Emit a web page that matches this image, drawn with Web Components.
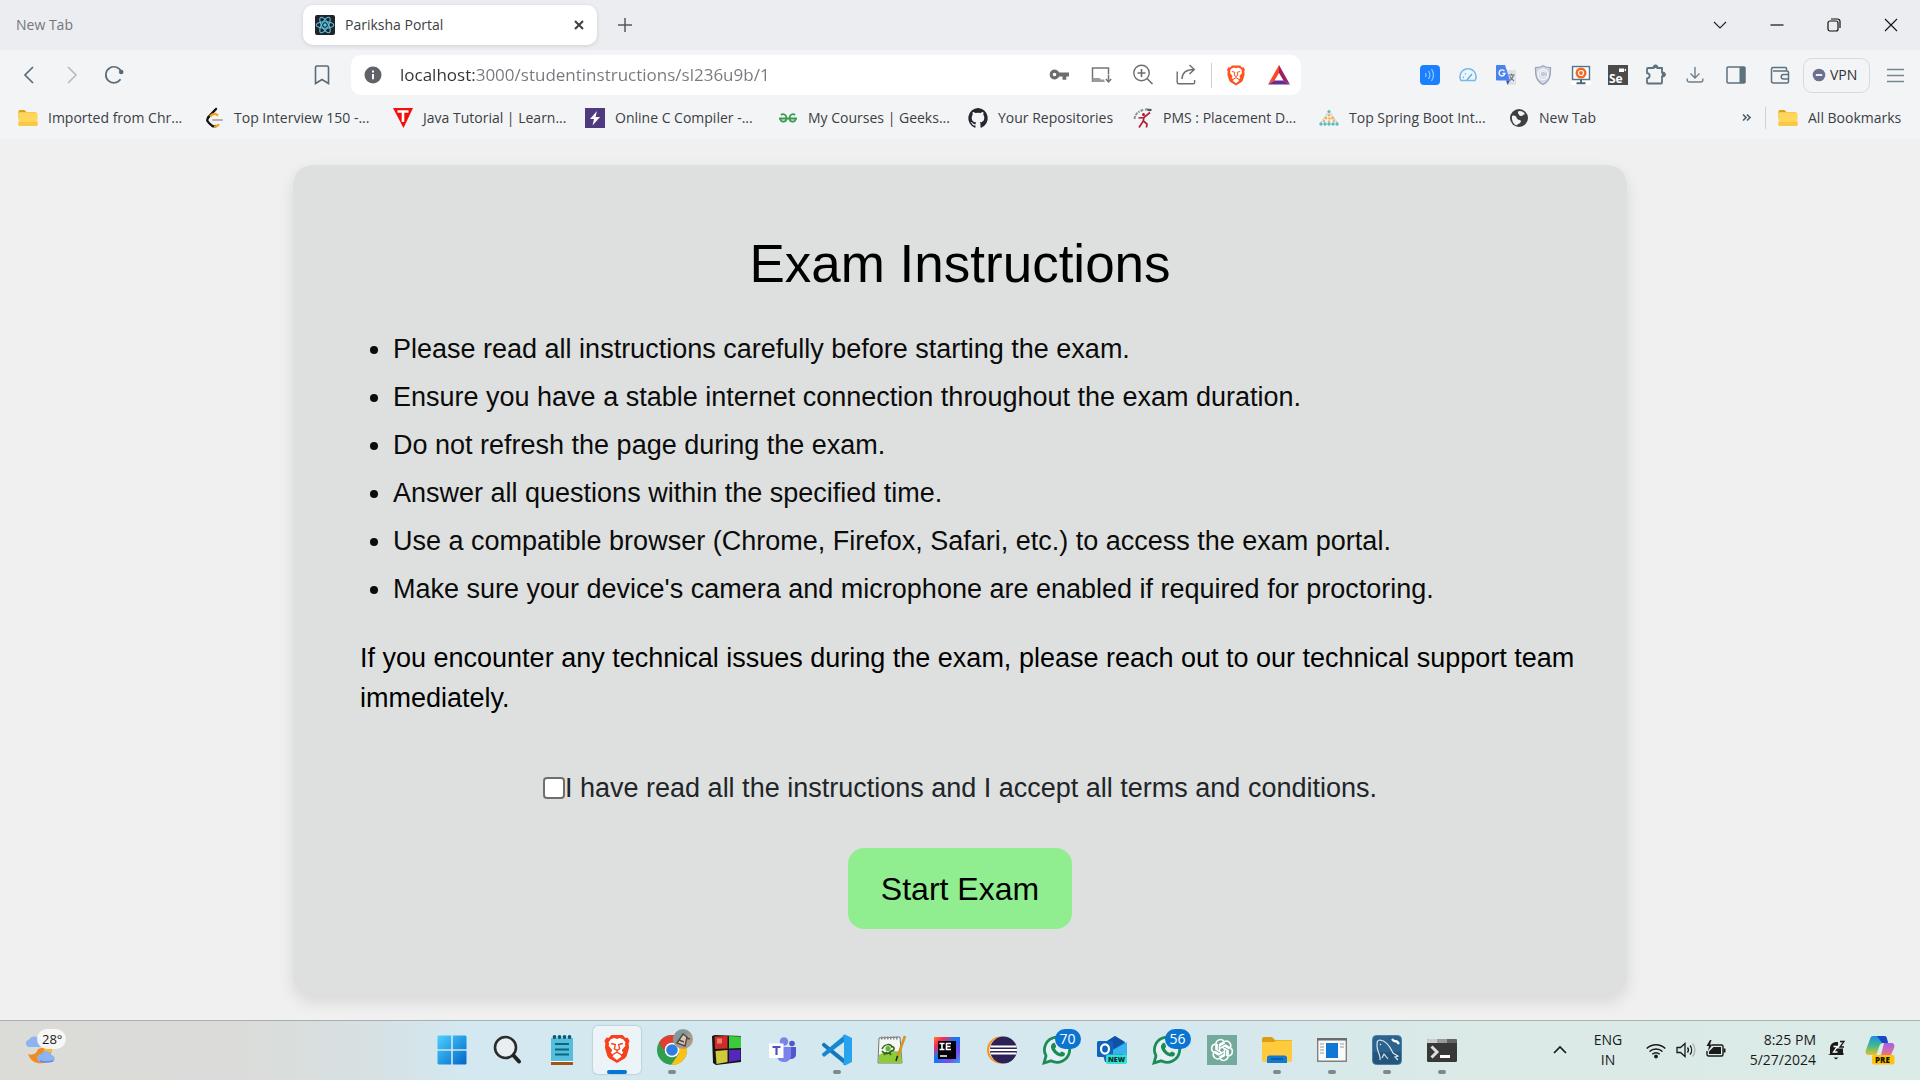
<!DOCTYPE html>
<html lang="en">
<head>
<meta charset="utf-8">
<title>Pariksha Portal</title>
<style>
  html, body { height: 100%; margin: 0; }
  body {
    display: flex; flex-direction: column;
    background: #f0f0f0; color: #3b3e44;
    font-family: "Open Sans", "Noto Sans", sans-serif; font-size: 14px; line-height: 20px;
  }
  exam-page { flex: 1; }
</style>
</head>
<body>
<tab-strip></tab-strip>
<nav-toolbar></nav-toolbar>
<bookmark-bar>
  <bookmark-link icon="folder" style="--label:136px">Imported from Chr...</bookmark-link>
  <bookmark-link icon="leet" style="--label:139px">Top Interview 150 -...</bookmark-link>
  <bookmark-link icon="tpoint" style="--label:142px">Java Tutorial | Learn...</bookmark-link>
  <bookmark-link icon="bolt" style="--label:143px">Online C Compiler -...</bookmark-link>
  <bookmark-link icon="geeks" style="--label:140px">My Courses | Geeks...</bookmark-link>
  <bookmark-link icon="github" style="--label:115px">Your Repositories</bookmark-link>
  <bookmark-link icon="pms" style="--label:136px">PMS : Placement D...</bookmark-link>
  <bookmark-link icon="spring" style="--label:140px">Top Spring Boot Int...</bookmark-link>
  <bookmark-link icon="globe" style="--label:57px">New Tab</bookmark-link>
  <bookmark-link slot="end" icon="folder" style="--label:96px">All Bookmarks</bookmark-link>
</bookmark-bar>
<exam-page>
  <exam-card>
    <span slot="title">Exam Instructions</span>
    <exam-rules></exam-rules>
    <exam-consent></exam-consent>
  </exam-card>
</exam-page>
<task-bar></task-bar>

<script>
const LION = `<path fill="FILL" d="M6 1.500h8l2 2 1.500-.3 1.500 2.600-.7 1.500.3 3.200-1.600 5.500c-.4 1.200-1.200 1.900-2.200 2.600L10 21.500l-4.800-2.900c-1-.7-1.800-1.400-2.200-2.600L1.400 10.500l.3-3.200L1 5.800l1.500-2.600L4 3.500z"/>
<path fill="#fff" d="M10 4.200l2-.7 2.400.9 1.700 2.300-.5 1 .4 1.400-2.600 3.200 1 1.800-1.100 1-2-1.200 1.900 2.800L10 19.200l-3.200-2.500 1.900-2.800-2 1.200-1.100-1 1-1.800L4 9.100l.4-1.400-.5-1 1.700-2.300L8 3.500z"/>
<path fill="none" stroke="FILL" stroke-width="1" d="M5.800 7.500l3 .8-.7 2.900 1.900 1.300 1.900-1.300-.7-2.900 3-.8M7.700 15l2.300-1.300 2.300 1.300M10 12.500v1.200"/>`;
const WHATS = `<path fill="#fff" fill-opacity=".35" stroke="#1c8b57" stroke-width="2.800" d="M2 28l2-7.200a12.600 12.600 0 1 1 5 5z"/>
<path fill="#1c8b57" d="M10.500 8.500c1-1 2-.9 2.500.1l1.100 2.600c.2.700-.9 1.600-1.200 2.200 1.100 2.200 2.800 3.600 4.900 4.500.7-.3 1.300-1.700 2-1.500l2.700 1.300c1 .6.4 2.500-.6 3.200-1.700 1.200-4.300.8-7-.7-3.300-1.900-5.500-5.200-5.900-7.600-.3-1.600.3-3 1.500-4.100z"/>`;
// Each entry: [width, height, markup]
const ICONS = {
  react: [20,20,`<rect width="20" height="20" rx="2" fill="#20232a"/><g fill="none" stroke="#5cc8e8" stroke-width="1.100"><ellipse cx="10" cy="10" rx="8.800" ry="3.300"/><ellipse cx="10" cy="10" rx="8.800" ry="3.300" transform="rotate(60 10 10)"/><ellipse cx="10" cy="10" rx="8.800" ry="3.300" transform="rotate(120 10 10)"/></g><circle cx="10" cy="10" r="1.700" fill="#5cc8e8"/>`],
  x: [12,12,`<path d="M2 2l8 8M10 2l-8 8" stroke="#3b3e44" stroke-width="2"/>`],
  plus: [16,16,`<path d="M8 1v14M1 8h14" stroke="#55585e" stroke-width="1.500"/>`],
  down: [14,14,`<path d="M1 4l6 6 6-6" fill="none" stroke="#222" stroke-width="1.100"/>`],
  min: [14,14,`<path d="M.5 7h13" stroke="#111" stroke-width="1.200"/>`],
  restore: [14,14,`<rect x="1" y="3" width="10" height="10" rx="2" fill="none" stroke="#111" stroke-width="1.200"/><path d="M4 1h6.500A2.500 2.500 0 0 1 13 3.500V10" fill="none" stroke="#111" stroke-width="1.200"/>`],
  close: [14,14,`<path d="M1 1l12 12M13 1L1 13" stroke="#111" stroke-width="1.100"/>`],
  back: [20,20,`<path d="M13 2l-8 8 8 8" fill="none" stroke="#5a6b78" stroke-width="1.700"/>`],
  fwd: [20,20,`<path d="M6 2l8 8-8 8" fill="none" stroke="#b4bcc4" stroke-width="1.700"/>`],
  reload: [20,20,`<path d="M16.500 14.200A8 8 0 1 1 17.400 7.200" fill="none" stroke="#5a6b78" stroke-width="1.700"/><circle cx="17.200" cy="7" r="2.300" fill="#5a6b78"/>`],
  mark: [20,20,`<path d="M3.500 2.500a1.500 1.500 0 0 1 1.500-1.500h10a1.500 1.500 0 0 1 1.500 1.500V18.500L10 14.500 3.500 18.500z" fill="none" stroke="#5a6b78" stroke-width="1.600"/>`],
  info: [18,18,`<circle cx="9" cy="9" r="8.500" fill="#5f6368"/><path d="M9 8v5.200M9 4.500v2" stroke="#fff" stroke-width="1.900"/>`],
  key: [22,22,`<path fill-rule="evenodd" fill="#6d6d6d" d="M11.200 8.500A5 5 0 1 0 11.200 12.500H14.500v3.200h3.800V12.500H21V8.500zM6.500 8.700a1.800 1.800 0 1 1 0 3.600 1.800 1.800 0 0 1 0-3.600z"/>`],
  install: [22,22,`<path d="M18.500 10V4H2.500v13.300h12" fill="none" stroke="#757575" stroke-width="1.500"/><path d="M2.500 14h7l1.500 1.500h3V18H2.500z" fill="#9b9b9b"/><path d="M18.500 10.500v7M15.800 15l2.700 3 2.700-3" fill="none" stroke="#757575" stroke-width="1.500"/>`],
  zoom: [22,22,`<circle cx="9.500" cy="9" r="7.700" fill="none" stroke="#6d6d6d" stroke-width="1.400"/><path d="M15 14.500l5.500 5.500M9.500 5v8M5.500 9h8" stroke="#6d6d6d" stroke-width="1.600"/>`],
  share: [22,22,`<path d="M2.200 7.500v10.700a1.600 1.600 0 0 0 1.600 1.600h14.500a1.300 1.300 0 0 0 1.300-1.300V16M7 15c0-6 3.500-9.500 12-9.500M14.500 1l4.800 4.500L14.500 10" fill="none" stroke="#6d6d6d" stroke-width="1.400"/>`],
  brave: [20,23,LION.replaceAll('FILL','#fb5420')],
  bat: [24,22,`<path d="M12 1L1 20.500l6.500-4L12 9z" fill="#ff4724"/><path d="M12 1l11 19.500-6.500-4L12 9z" fill="#9e1f63"/><path d="M1 20.500h22l-6.500-4h-9z" fill="#662d91"/>`],
  wave: [20,20,`<rect width="20" height="20" rx="4" fill="#1a80ff"/><path d="M5.500 8a4 4 0 0 1 0 4M8.500 6a7 7 0 0 1 0 8M11.500 4a11 11 0 0 1 0 12" fill="none" stroke="#8fc4ff" stroke-width="1.300"/>`],
  gauge: [20,20,`<path d="M3 15.500a8 8 0 1 1 14 0z" fill="#eaf5fd" stroke="#7bb8e4" stroke-width="1.500"/><path d="M9 15l5-6M5 12l1 .5M7 8.500l.7.800" stroke="#6aaedd" stroke-width="1.500"/>`],
  translate: [20,20,`<path d="M8 5h11a1 1 0 0 1 1 1v13a1 1 0 0 1-1 1h-7z" fill="#dfe1e5"/><path d="M1 0h8l5 15.500H1a1 1 0 0 1-1-1V1a1 1 0 0 1 1-1z" fill="#4a82ee"/><path d="M10 15.500h4l-2.500 4.500z" fill="#3a4fc0"/><path d="M8.500 6.200A3 3 0 1 0 9 8.500H6.500" fill="none" stroke="#fff" stroke-width="1.300"/><path d="M12.500 10h6M15.500 8.700V10M17.500 10c-.7 3-2.500 4.500-3.500 5.500M14 11.500c1 2 2.500 3.500 4 4.300" fill="none" stroke="#5f6b7b" stroke-width="1.100"/>`],
  shield: [20,20,`<path d="M10 .7c2.500 1.500 5 2 7.500 2C17.700 10 17 16 10 19.500 3 16 2.300 10 2.500 2.700c2.500 0 5-.5 7.500-2z" fill="#d3d9e4" stroke="#9aa4b8" stroke-width="1.300"/><circle cx="10" cy="9.500" r="5" fill="#c3c9d6" stroke="#f6f7fa" stroke-width="1.600"/><path d="M12.500 7.500a3 3 0 1 0 .3 3" fill="none" stroke="#f6f7fa" stroke-width="1.200"/>`],
  monitor: [20,20,`<path fill="#fff" d="M0 0h20v20H0z"/><rect x="1.500" y="1.500" width="17" height="13" fill="#fff" stroke="#557888" stroke-width="1.500"/><path d="M10 15v3M5.500 18.300h9" stroke="#4c6b7c" stroke-width="2"/><circle cx="10" cy="8" r="5.500" fill="#f26a21"/><circle cx="10" cy="8" r="2.500" fill="none" stroke="#fff" stroke-width="1.200"/>`],
  se: [20,20,`<path fill="#4b4b4b" d="M0 0h20v20H0z"/><path d="M11 3.500h5v3.500h-5zM16 5l2-1.500v3z" fill="#fff"/><text x="1" y="18" font-family="Open Sans" font-size="12" font-weight="700" fill="#fff">Se</text>`],
  puzzle: [22,22,`<path d="M4 4h4.500c-.5-3.500 4.500-3.500 4 0H17v4.500c4-.5 4 4.500 0 4V18.500a1 1 0 0 1-1 1H3a1 1 0 0 1-1-1V14.500c3.500-.5 3.500-5 0-5.500V5a1 1 0 0 1 1-1z" fill="none" stroke="#5c727f" stroke-width="1.800"/><path d="M8.500 4c-.5-3.500 4.500-3.500 4 0zM17 8.500c4-.5 4 4.500 0 4z" fill="#5c727f"/>`],
  download: [20,20,`<path d="M10 2v10.500M5.500 8.500l4.500 4.500 4.500-4.500M2.200 13.500v1.500a2 2 0 0 0 2 2h11.600a2 2 0 0 0 2-2v-1.500" fill="none" stroke="#6c7f8b" stroke-width="1.400"/>`],
  side: [20,20,`<rect x="1" y="2" width="18" height="16" rx="1" fill="none" stroke="#5c727f" stroke-width="1.500"/><path d="M13.500 2H19v16h-5.500z" fill="#5c727f"/>`],
  wallet: [22,20,`<path d="M17.500 6V3.500a1 1 0 0 0-1-1H4A1.500 1.500 0 0 0 2.500 4v12A2 2 0 0 0 4.500 18h13.500a1.500 1.500 0 0 0 1.500-1.500V7.500A1.500 1.500 0 0 0 18 6H4" fill="none" stroke="#5c727f" stroke-width="1.500"/><path d="M20 9.500h-5.500a2.200 2.200 0 0 0 0 4.500H20" fill="none" stroke="#5c727f" stroke-width="1.500"/>`],
  vpn: [14,14,`<circle cx="7" cy="7" r="6.300" fill="#6d7090"/><path d="M3.800 7h6.400" stroke="#fff" stroke-width="1.800"/>`],
  menu: [18,18,`<path d="M1 3.500h17M1 9.500h17M1 15.500h17" stroke="#75868f" stroke-width="1.400"/>`],
  folder: [20,20,`<path d="M.5 3.500a1.500 1.500 0 0 1 1.500-1.500h4.500l1.800 2H18v6H.5z" fill="#dca017"/><rect x=".5" y="4.300" width="19" height="13.700" rx="1.500" fill="#ffd65c"/><path d="M.5 14v2.500A1.500 1.500 0 0 0 2 18h16a1.500 1.500 0 0 0 1.500-1.500V14z" fill="#f7c843"/>`],
  leet: [20,20,`<path d="M12 1L4.500 9" stroke="#111" stroke-width="2.400" stroke-linecap="round"/><path d="M5 8.500C2 12 3 13 5.500 15.500S9 19 12 18" fill="none" stroke="#111" stroke-width="2.400"/><path d="M6 8.500c3-3.500 5-3.500 8-1M10 18.500c2 .5 3.500-.7 5-2.300" fill="none" stroke="#f7a11b" stroke-width="2.400"/><path d="M9 12h9" stroke="#b3b3b3" stroke-width="2.200" stroke-linecap="round"/>`],
  tpoint: [20,20,`<path d="M0 0h20L10.500 20z" fill="#f30d0d"/><path d="M4.500 3.500h11M10 3.500V14" stroke="#fff" stroke-width="2.600"/>`],
  bolt: [20,20,`<path fill="#4f3a80" d="M0 0h20v20H0z"/><path d="M12 3L5 11h4l-1.500 6.500L15 9h-4.500z" fill="#fff"/>`],
  geeks: [20,20,`<path d="M1 10.500h18M3 7.200c2-2.200 5.500-.5 5.500 3 0 4.500-6.500 4.800-6 .3M17 7.200c-2-2.200-5.500-.5-5.500 3 0 4.500 6.500 4.800 6 .3" fill="none" stroke="#3a9c52" stroke-width="1.800"/>`],
  github: [20,20,`<path fill="#22272e" fill-rule="evenodd" d="M10 0a10.200 10.200 0 0 0-3.200 19.700c.5.100.7-.2.700-.5v-1.800c-2.800.6-3.400-1.300-3.400-1.300-.5-1.200-1.100-1.500-1.100-1.500-.9-.6.100-.6.100-.6 1 .1 1.500 1 1.500 1 .9 1.600 2.400 1.100 3 .9.100-.7.400-1.100.6-1.400-2.200-.3-4.500-1.100-4.500-5 0-1.100.4-2 1-2.700-.1-.3-.4-1.300.1-2.700 0 0 .8-.3 2.700 1a9.400 9.400 0 0 1 5 0c1.900-1.300 2.700-1 2.700-1 .5 1.400.2 2.400.1 2.700.6.700 1 1.600 1 2.700 0 3.900-2.300 4.700-4.500 5 .4.300.7.900.7 1.900v2.800c0 .3.200.6.700.5A10.200 10.200 0 0 0 10 0z"/>`],
  pms: [20,20,`<path d="M1.500 11c.5-3.500 2-6 5-7.500M7.500 3l3-1.500M12 1.800l4-1" fill="none" stroke="#8a9696" stroke-width="2" stroke-dasharray="3 1"/><ellipse cx="16.500" cy="2" rx="2.300" ry="1.300" fill="#4e5c5c"/><circle cx="10.500" cy="6.500" r="1.500" fill="#a6192e"/><path d="M5.500 10l5.500-.5 6-5M11 9.500l-1 4-4 6M10.500 13l3.500 3-.5 3.500" fill="none" stroke="#b11f36" stroke-width="1.700"/>`],
  spring: [20,20,`<path d="M10 3L2 14.500M10 3l8 11.500" stroke="#a9d8dc" stroke-width="1.200" stroke-dasharray="2 1"/><g fill="#f6b15c"><circle cx="10" cy="7" r="1.500"/><circle cx="7" cy="10" r="1.500"/><circle cx="10.500" cy="10.500" r="1.300"/><circle cx="13.500" cy="10" r="1.500"/><circle cx="5" cy="13" r="1.300"/><circle cx="10" cy="13.500" r="1.300"/><circle cx="15" cy="13" r="1.300"/></g><g fill="#58bcc4"><circle cx="10" cy="3.500" r="1.500"/><circle cx="2" cy="16" r="1.700"/><circle cx="6" cy="16" r="1.700"/><circle cx="10" cy="16" r="1.700"/><circle cx="14" cy="16" r="1.700"/><circle cx="18" cy="16" r="1.700"/></g>`],
  globe: [20,20,`<circle cx="10" cy="10" r="9" fill="#3c4043"/><path d="M3 8c2-1 4 0 4.500 1.500S9 12 10.500 12s2 1.500.5 3-3 1-3.500 2.500C4 16 2.500 12 3 8zM9 3.500c2-1.500 5.500 0 7 2.500-2 .5-2 2-4 2S10 6 9 5.500z" fill="#f3f4f6"/>`],
  more: [12,12,`<path d="M2 2.500L5 5.500 2 8.500M6 2.500l3 3-3 3" fill="none" stroke="#4f5f6d" stroke-width="1.700"/>`],
  weather: [32,30,`<path d="M3 19c5 2 9-1 10-5l10-3 4 3-2 10c-4 6-18 7-22-5z" fill="#f08c1c"/><path d="M19 12h8v6h-8z" fill="#f6b93a"/><path d="M3 12a4 4 0 0 1 1-7.500 6 6 0 0 1 10.500 0c4 0 5 7.500.5 7.500z" fill="#8db3f2"/><path d="M16 27a4 4 0 0 1 .500-8 5 5 0 0 1 9.500 1c4.500 0 5 7 1 7z" fill="#8db3f2"/><path d="M15 26c3 1 9 1 13 0" stroke="#5f8ce0" stroke-width="1.600" fill="none"/>`],
  start: [30,30,`<defs><linearGradient id="g" x1="0" y1="0" x2="1" y2="1"><stop stop-color="#4cd0ff"/><stop offset="1" stop-color="#0067c9"/></linearGradient></defs><path fill="url(#g)" d="M1.500.5h12.700v13.700H.5V1.500zM15.800.5h12.700l1 1v12.700H15.800zM.5 15.800h13.700v13.700H1.500l-1-1zM15.800 15.800h13.700v12.700l-1 1H15.800z"/>`],
  search: [30,30,`<circle cx="13.500" cy="12.500" r="10.500" fill="#e7eff3" stroke="#2b2b2b" stroke-width="2.600"/><path d="M21.500 20.500l5.500 6" stroke="#222" stroke-width="4" stroke-linecap="round"/>`],
  notes: [30,30,`<path fill="#a3540f" d="M4 26h22v4H4z"/><path fill="#fff" d="M4 25h22v2H4z"/><path fill="#55bedc" d="M4 3h22v23H4z"/><path d="M8 9h14M8 14.500h14M8 19.500h14" stroke="#096781" stroke-width="2"/><g fill="#075a72"><circle cx="7.500" cy="2" r="1.900"/><circle cx="12.500" cy="2" r="1.900"/><circle cx="17.500" cy="2" r="1.900"/><circle cx="22.500" cy="2" r="1.900"/></g>`],
  braveBig: [26,30,`<g transform="translate(-1 -2) scale(1.400)">${LION.replaceAll('FILL','#f8401c')}</g>`],
  chrome: [30,30,`<g transform="translate(0 -6)"><circle cx="15" cy="21" r="15" fill="#2f9e4e"/><path d="M2 13.500A15 15 0 0 1 28 13.500H15L9 24z" fill="#e13d31"/><path d="M28 13.500A15 15 0 0 1 14 36l8-11.500-1-11z" fill="#fbc116"/><circle cx="15" cy="21" r="7.300" fill="#fff"/><circle cx="15" cy="21" r="5.800" fill="#2f7de1"/><circle cx="26" cy="10" r="10" fill="#a89a8c"/><path d="M18 5c3-5 11-6 15-1l-5 2-5 8-5 2-1-6z" fill="#7d9a9e"/><path d="M20 14l6-9 4 3-2 9zM29 9l4 1M22 11l5 2" fill="#d8c7b6" stroke="#54463e" stroke-width="1.400"/></g>`],
  cube: [30,30,`<path fill="#141414" d="M0 1l3-1 26 1v26L4 30l-3-2z"/><path fill="#d22a28" d="M2.500 1.500L15.500 1v12.500L3 14z"/><path fill="#e98070" d="M5 3.500h5v5H5z"/><path fill="#3dc93c" d="M17 1l12 .5V13l-12 .5z"/><path fill="#cfc93c" d="M3.500 16l12-1v12L4.500 29z"/><path fill="#5426bb" d="M17 15l11.500-.5V25L17 27z"/>`],
  teams: [30,30,`<circle cx="17" cy="6.500" r="4.200" fill="#7b83eb"/><circle cx="25" cy="8.500" r="2.800" fill="#5059c9"/><path d="M20 12h9v8a5 5 0 0 1-8 3z" fill="#5059c9"/><path d="M10 12h14v8a7 6 0 0 1-14 2z" fill="#7b83eb"/><path d="M2 8.500h14.500v14.500H2z" fill="#fff"/><path d="M5.500 12h8M9.500 12v8" stroke="#4b53bc" stroke-width="2.200"/>`],
  code: [32,32,`<path d="M1 10l2-1.500 20 16V30L1.300 12z" fill="#1478bd"/><path d="M1 21l2 2L23 8V1.500L1.300 19.500z" fill="#1688d2"/><path d="M22 1l2-.5 7 3.500v24l-7 3.500-2-1 1-4V6z" fill="#28a4ee"/>`],
  npp: [30,30,`<path d="M2 3l21-1 2 26H1z" fill="#f6f6f2" stroke="#777"/><path d="M4 3h18" stroke="#888" stroke-width="3" stroke-dasharray="1.500 1.500"/><path d="M2 20c7-4 14-5 22-3l1 11H2z" fill="#8dcb3b"/><path d="M5 14c3-6 9-5 10-2 3-1 3 4-1 4-2 4-7 3-9 0M7 20l3-3M14 20l-2-3" fill="none" stroke="#2d5d1c" stroke-width="1.500"/><circle cx="11" cy="13.500" r="2.600" fill="#67b23a"/><path d="M28 1L20.500 22" stroke="#d79326" stroke-width="2.600"/><path d="M20.500 21l-1.500 5" stroke="#222" stroke-width="1.500"/>`],
  idea: [26,26,`<defs><linearGradient id="i" x1="0" y1="0" x2="1" y2="1"><stop stop-color="#fc801d"/><stop offset=".2" stop-color="#fe2857"/><stop offset=".45" stop-color="#087cfa"/><stop offset=".75" stop-color="#7a4cf0"/><stop offset="1" stop-color="#31a4f5"/></linearGradient></defs><path fill="url(#i)" d="M0 0h26v26H0z"/><path fill="#050008" d="M4 4h18v18H4z"/><path d="M5.500 6.500h5M8 6.500v6M5.500 12.500h5M17 6.500h-4.500v6H17M12.500 9.500h4M6 19h7" fill="none" stroke="#fff" stroke-width="1.600"/>`],
  eclipse: [30,28,`<circle cx="13.500" cy="14" r="13.500" fill="#f7941e"/><circle cx="14.500" cy="14" r="12.500" fill="#f3e2cd"/><circle cx="16.500" cy="14" r="13.500" fill="#2c2255"/><path d="M3.500 10.500h26M3 14h27M3.500 17.500h26" stroke="#fff" stroke-width="1.900"/>`],
  whats: [30,30,WHATS],
  outlook: [30,30,`<path d="M5 10L18 1l12 8v12H5z" fill="#1a6fd0"/><path d="M5 9L18 1l10 6-14 9z" fill="#1051a8"/><path d="M14 16l16-9v14H12z" fill="#39b3ef"/><path d="M6 20l20-1v6a2 2 0 0 1-2 2H8z" fill="#1f5fae"/><rect y="6" width="16" height="16" rx="1.500" fill="#0f63bd"/><ellipse cx="8" cy="14" rx="4" ry="4.600" fill="none" stroke="#fff" stroke-width="2.200"/><rect x="9" y="19.500" width="21" height="9.500" rx="2" fill="#2fe0d5"/><text x="11" y="27" font-family="Open Sans" font-size="7" font-weight="800" fill="#05302e">NEW</text>`],
  gpt: [30,30,`<path fill="#74aa9c" d="M0 0h30v30H0z"/><g fill="none" stroke="#fff" stroke-width="1.500">${[0,60,120,180,240,300].map(a=>`<path transform="rotate(${a} 15 15)" d="M12.500 16.500V9.500L17 6.800a4.500 4.500 0 0 1 6.500 5.500M12.500 10.800l5.200-3"/>`).join('')}</g>`],
  files: [30,28,`<path d="M0 3a2 2 0 0 1 2-2h8l3 3h17v8H0z" fill="#dd9d10"/><path d="M0 6h12l2-1.500h16V24a2 2 0 0 1-2 2H2a2 2 0 0 1-2-2z" fill="#fecb3c"/><path d="M5 27v-5a2.500 2.500 0 0 1 2.500-2.500h15A2.500 2.500 0 0 1 25 22v5z" fill="#137ad1"/><path d="M9 23h12" stroke="#0a4c92" stroke-width="1.300"/>`],
  panel: [30,24,`<path fill="#fafafa" stroke="#808080" stroke-width="1.400" d="M.7.7h28.600v22.600H.7z"/><path fill="#6c6c6c" d="M0 0h30v2.500H0z"/><path fill="#0f78d4" d="M9 5h12v15H9z"/><path d="M3 6h4M3 9h4M3 12h4M3 15h4M23 6h4M23 9h4" stroke="#999"/>`],
  mysql: [30,30,`<rect x=".5" y=".5" width="29" height="29" rx="4" fill="#2c638e" stroke="#477fa9"/><path d="M1 17h28v8a4 4 0 0 1-4 4H5a4 4 0 0 1-4-4z" fill="#24557a"/><path d="M8 25c1-4-3-9-3-14 0-4 0-6 3-6 8 1 11 9 13 13l5 3-3 1 3 3M10 23l2-4 4 5M8 9l1 1" fill="none" stroke="#d9e7f1" stroke-width="1.200"/><path d="M20 4l2 2 3 .5L27 9" stroke="#fff" stroke-width="2.300" fill="none"/>`],
  term: [30,24,`<rect width="30" height="23" rx="1.500" y="1" fill="#383838"/><path fill="#ccc" d="M1 1h9v4H0V2z"/><path fill="#9a9a9a" d="M10 1h10v4H10z"/><path fill="#636363" d="M20 1h9l1 1v3H20z"/><path d="M4.500 8.500L10 14l-5.500 5.500" fill="none" stroke="#ddd" stroke-width="3"/><path d="M13 18.500h10" stroke="#fff" stroke-width="3"/>`],
  up: [14,14,`<path d="M1 10l6-6 6 6" fill="none" stroke="#1a1a1a" stroke-width="1.700"/>`],
  wifi: [20,20,`<g fill="none" stroke="#1a1a1a" stroke-width="1.500"><path d="M.7 8.500a13.500 13.500 0 0 1 18.600 0M3.500 11.500a9.500 9.500 0 0 1 13 0M6.300 14.300a5.500 5.500 0 0 1 7.400 0"/></g><circle cx="10" cy="16.500" r="1.900" fill="#1a1a1a"/>`],
  sound: [20,20,`<path d="M1 7.500h3.500L9 3.500v13L4.500 12.500H1zM11.500 7.500a4 4 0 0 1 0 5M14 5.500a7 7 0 0 1 0 9" fill="none" stroke="#1a1a1a" stroke-width="1.300"/><path d="M16.500 3.500a10 10 0 0 1 0 13" fill="none" stroke="#a9b5b5" stroke-width="1.300"/>`],
  battery: [20,20,`<path d="M6 5h9.500A1.500 1.500 0 0 1 17 6.500v8A1.500 1.500 0 0 1 15.500 16h-13A1.500 1.500 0 0 1 1 14.500V11" fill="none" stroke="#1a1a1a" stroke-width="1.400"/><path d="M7.500 7H15v7H3v-2.500zM17.500 8.500h2v4h-2zM4 0L.5 6H3l-1 5 4.500-6.500H4L5.500 0z" fill="#1a1a1a"/>`],
  bell: [20,20,`<path d="M3 14V8a6 6 0 0 1 6-6h2v6h5v5h.500v2H1z" fill="#1a1a1a"/><path d="M6.500 17.500h5l-2.500 2z" fill="#1a1a1a"/><path d="M12 1.500h4.500L12 7h4.500" fill="none" stroke="#dcebe6" stroke-width="3"/><path d="M13 1.500h4L13 7h4" fill="none" stroke="#1a1a1a" stroke-width="1.300"/><path d="M6.500 6.500h4l-4 5.500h4" fill="none" stroke="#fff" stroke-width="1.300"/>`],
  copilot: [30,30,`<defs><linearGradient id="c" x1="0" y1="0" x2="0" y2="1"><stop stop-color="#1b8eea"/><stop offset=".5" stop-color="#3fb98f"/><stop offset="1" stop-color="#e8c22a"/></linearGradient><linearGradient id="d" x1="0" y1="0" x2="0" y2="1"><stop stop-color="#a25cf2"/><stop offset="1" stop-color="#ff7a63"/></linearGradient></defs><path d="M8 1h11c2 0 2.500 1 3 3l1 4h-4c-3 0-4 1-5 4l-2 6c-.5 1.500-1 2-3 2H4c-3 0-4-2-3-5L5 4c.6-2 1.500-3 3-3z" fill="url(#c)"/><path d="M12 1h7c2 0 2.500 1 3 3l1 4h-6z" fill="#1b46c4"/><path d="M19 8h7c3 0 4 2 3 5l-3 7-2 3H13c2 0 2.500-1 3-3z" fill="url(#d)"/><rect x="7" y="20" width="22.500" height="9.500" rx="2" fill="#fdc40d"/><text x="10" y="27.500" font-family="Open Sans" font-size="8" font-weight="800" fill="#1b1500">PRE</text>`]
};

function define(name, html, setup) {
  const tpl = document.createElement('template');
  tpl.innerHTML = html;
  customElements.define(name, class extends HTMLElement {
    constructor() { super(); this.attachShadow({ mode: 'open' }).append(tpl.content.cloneNode(true)); }
    connectedCallback() { if (setup) setup(this, this.shadowRoot); }
  });
}

define('ui-icon', `<style>:host{display:inline-flex;flex:none}svg{display:block;overflow:visible}</style><span></span>`, (el, root) => {
  const [w, h, body] = ICONS[el.getAttribute('name')];
  root.querySelector('span').innerHTML = `<svg width="${w}" height="${h}" viewBox="0 0 ${w} ${h}" aria-hidden="true">${body}</svg>`;
});

/* Icon-only button; its width comes from --cell */
define('icon-button', `<style>
  :host{display:inline-flex;flex:none}
  button{display:flex;align-items:center;justify-content:center;width:var(--cell,38px);height:32px;padding:0;border:0;background:none}
</style><button type="button"></button>`, (el, root) => {
  const button = root.querySelector('button');
  button.setAttribute('aria-label', el.getAttribute('label'));
  button.innerHTML = `<ui-icon name="${el.getAttribute('icon')}"></ui-icon>`;
});

define('tab-strip', `<style>
  :host{display:flex;align-items:center;height:50px;background:#ecedf1}
  .idle,.active{font:inherit;color:inherit;border:0;text-align:left}
  .idle{width:303px;padding:0 16px;background:none;color:#73767c;font-size:14px;box-sizing:border-box}
  .active{display:flex;align-items:center;gap:10px;width:294px;height:40px;box-sizing:border-box;padding:0 0 0 12px;border-radius:10px;background:#fff;box-shadow:0 1px 4px rgba(0,0,0,.12)}
  .tab{flex:1;font:inherit;color:inherit;border:0;background:none;padding:0;text-align:left}
  .add{--cell:56px}
  .win{margin-left:auto;margin-right:1px;display:flex;--cell:57px}
</style>
<button class="idle" type="button">New Tab</button>
<div class="active"><ui-icon name="react"></ui-icon><button class="tab" type="button">Pariksha Portal</button><icon-button icon="x" label="Close tab" style="--cell:36px"></icon-button></div>
<icon-button class="add" icon="plus" label="New tab"></icon-button>
<div class="win"><icon-button icon="down" label="Search tabs"></icon-button><icon-button icon="min" label="Minimize"></icon-button><icon-button icon="restore" label="Restore"></icon-button><icon-button icon="close" label="Close"></icon-button></div>`);

define('nav-toolbar', `<style>
  :host{display:flex;align-items:center;height:50px;background:#f3f4f6}
  .nav{display:flex;width:303px;box-sizing:border-box;padding-left:9px;--cell:42px}
  .url{display:flex;align-items:center;flex:1;height:40px;margin-left:10px;border-radius:10px;background:#fff;padding:0 0 0 13px;--cell:42px}
  input{flex:1;min-width:0;margin-left:18px;padding:0;border:0;outline:0;font:inherit;font-size:17px;line-height:24px;color:#6b6e73;
    background:linear-gradient(90deg,#2f3237 75px,#75787d 75px);-webkit-background-clip:text;background-clip:text;-webkit-text-fill-color:transparent}
  .line{width:1px;height:25px;background:#ccc;margin:0 3px}
  .ext{display:flex;margin-left:110px;--cell:38px}
  .vpn{display:flex;align-items:center;gap:4px;width:67px;height:35px;box-sizing:border-box;padding:0 0 0 8px;border:1px solid #d3dae0;border-radius:9px;background:none;font:inherit;color:#2f3237}
  .menu{--cell:50px}
</style>
<div class="nav"><icon-button icon="back" label="Back"></icon-button><icon-button icon="fwd" label="Forward"></icon-button><icon-button icon="reload" label="Reload"></icon-button></div>
<icon-button icon="mark" label="Bookmark this page"></icon-button>
<div class="url"><ui-icon name="info"></ui-icon>
  <input type="text" aria-label="Address" value="localhost:3000/studentinstructions/sl236u9b/1">
  <icon-button icon="key" label="Passwords"></icon-button><icon-button icon="install" label="Install"></icon-button><icon-button icon="zoom" label="Zoom"></icon-button><icon-button icon="share" label="Share" style="--cell:44px"></icon-button><span class="line"></span><icon-button icon="brave" label="Shields"></icon-button><icon-button icon="bat" label="Rewards" style="--cell:44px"></icon-button></div>
<div class="ext"><icon-button icon="wave" label="Reader"></icon-button><icon-button icon="gauge" label="Speed"></icon-button><icon-button icon="translate" label="Translate" style="--cell:37px"></icon-button><icon-button icon="shield" label="Guard"></icon-button><icon-button icon="monitor" label="Monitor" style="--cell:37px"></icon-button><icon-button icon="se" label="Selenium"></icon-button><icon-button icon="puzzle" label="Extensions"></icon-button><icon-button icon="download" label="Downloads" style="--cell:40px"></icon-button><icon-button icon="side" label="Sidebar" style="--cell:42px"></icon-button><icon-button icon="wallet" label="Wallet" style="--cell:46px"></icon-button></div>
<button class="vpn" type="button"><ui-icon name="vpn"></ui-icon>VPN</button>
<icon-button class="menu" icon="menu" label="Menu"></icon-button>`);

define('bookmark-bar', `<style>
  :host{display:flex;align-items:center;height:39px;box-sizing:border-box;padding:0 16px 4px 18px;background:#f3f4f6;gap:20px}
  .end{display:flex;align-items:center;margin-left:auto;gap:12px}
  .line{width:1px;height:22px;background:#cdd2d8}
  icon-button{--cell:12px}
</style><slot></slot><div class="end"><icon-button icon="more" label="More bookmarks"></icon-button><span class="line"></span><slot name="end"></slot></div>`);

define('bookmark-link', `<style>
  :host{display:block;flex:none}
  a{display:flex;align-items:center;gap:10px;color:#3b3e44;text-decoration:none;white-space:nowrap}
  .label{width:var(--label)}
</style><a href="#"><span class="label"><slot></slot></span></a>`, (el, root) => {
  root.querySelector('a').insertAdjacentHTML('afterbegin', `<ui-icon name="${el.getAttribute('icon')}"></ui-icon>`);
});

define('exam-page', `<style>
  :host{display:block;box-sizing:border-box;padding:26px 293px 0;background:#f0f0f0;font-family:"Liberation Sans",Arial,sans-serif;font-size:27px;line-height:40px;color:#0b0b0b}
</style><slot></slot>`);

define('exam-card', `<style>
  :host{display:block;padding:67px 52px 67px 67px;border-radius:20px;background:#dee0df;box-shadow:0 6px 16px rgba(0,0,0,.1)}
  h1{margin:0 15px 33px 0;font-size:53px;line-height:64px;font-weight:400;text-align:center;color:#000}
</style><h1><slot name="title"></slot></h1><slot></slot>`);

define('exam-rules', `<style>
  :host{display:block}
  ul{display:grid;gap:8px;margin:0 0 29px;padding:0 0 0 33px}
  p{margin:0;color:#000}
</style><ul>
<li>Please read all instructions carefully before starting the exam.</li>
<li>Ensure you have a stable internet connection throughout the exam duration.</li>
<li>Do not refresh the page during the exam.</li>
<li>Answer all questions within the specified time.</li>
<li>Use a compatible browser (Chrome, Firefox, Safari, etc.) to access the exam portal.</li>
<li>Make sure your device's camera and microphone are enabled if required for proctoring.</li>
</ul><p>If you encounter any technical issues during the exam, please reach out to our technical support team immediately.</p>`);

define('exam-consent', `<style>
  :host{display:flex;flex-direction:column;align-items:center;gap:40px;padding-top:50px;margin-right:15px}
  .row{display:flex;align-items:center;color:#212529}
  input{appearance:none;width:22px;height:22px;margin:0;border:2px solid #6e6e6e;border-radius:4px;background:#fff}
  button{height:81px;padding:0 33px;border:0;border-radius:16px;background:#90ee90;color:#000;font:inherit;font-size:32px}
</style><div class="row"><input type="checkbox" id="ok"><label for="ok">I have read all the instructions and I accept all terms and conditions.</label></div>
<button type="button">Start Exam</button>`);

/* Taskbar application: state="open|active" draws the running mark, badge="n" the counter */
define('task-app', `<style>
  :host{display:flex;flex:none;width:55px;height:56px;align-items:center;justify-content:center}
  button{position:relative;display:flex;align-items:center;justify-content:center;width:48px;height:48px;padding:0;border:0;border-radius:5px;background:none;font:inherit}
  :host([state=active]) button{background:#ecf4f8;box-shadow:0 0 1px 1px rgba(120,150,165,.25)}
  i{position:absolute;bottom:0;width:8px;height:4px;border-radius:2px;background:#808888;display:none}
  :host([state]) i{display:block}
  :host([state=active]) i{width:20px;background:#0078d4}
  b{position:absolute;top:3px;left:22px;width:26px;height:20px;border-radius:10px;background:#0b74d1;color:#fff;font-weight:400;font-size:14px;line-height:20px;text-align:center}
</style><button type="button"></button>`, (el, root) => {
  const b = root.querySelector('button');
  b.setAttribute('aria-label', el.getAttribute('icon'));
  const n = el.getAttribute('badge');
  b.innerHTML = `<ui-icon name="${el.getAttribute('icon')}"></ui-icon><i></i>${n ? `<b>${n}</b>` : ''}`;
});

define('task-bar', `<style>
  :host{display:flex;align-items:center;height:60px;box-sizing:border-box;padding-bottom:1px;border-top:1px solid #a8b0b2;color:#1a1a1a;
    background:linear-gradient(90deg,#dbdbd8 0,#dbdcd9 12%,#d7e0e2 19%,#d3e8f0 24%,#d5e8ee 62%,#dbeae6 78%,#dbebe7 100%)}
  .weather{flex:1;padding-left:25px}
  .wx{position:relative;display:inline-flex;vertical-align:middle}
  .wx span{position:absolute;left:12px;top:-6px;padding:0 4px 0 5px;border-radius:10px;background:rgba(250,250,248,.9);font-size:13px}
  .apps,.tray{display:flex;align-items:center}
  .tray{width:451px;box-sizing:border-box;padding-right:18px;justify-content:flex-end;--cell:30px}
  .lang{width:66px;text-align:center}
  .time{width:85px;text-align:right}
  .lang,.time{font-size:14px;line-height:20px}
</style>
<div class="weather"><div class="wx"><ui-icon name="weather"></ui-icon><span>28°</span></div></div>
<div class="apps">
<task-app icon="start"></task-app><task-app icon="search"></task-app><task-app icon="notes"></task-app><task-app icon="braveBig" state="active"></task-app><task-app icon="chrome" state="open"></task-app><task-app icon="cube"></task-app><task-app icon="teams"></task-app><task-app icon="code" state="open"></task-app><task-app icon="npp"></task-app><task-app icon="idea"></task-app><task-app icon="eclipse"></task-app><task-app icon="whats" badge="70"></task-app><task-app icon="outlook"></task-app><task-app icon="whats" badge="56"></task-app><task-app icon="gpt"></task-app><task-app icon="files" state="open"></task-app><task-app icon="panel" state="open"></task-app><task-app icon="mysql" state="open"></task-app><task-app icon="term" state="open"></task-app>
</div>
<div class="tray"><icon-button icon="up" label="Hidden icons"></icon-button><div class="lang">ENG<br>IN</div><icon-button icon="wifi" label="Network"></icon-button><icon-button icon="sound" label="Volume"></icon-button><icon-button icon="battery" label="Battery"></icon-button><div class="time">8:25 PM<br>5/27/2024</div><icon-button icon="bell" label="Notifications" style="--cell:42px"></icon-button><icon-button icon="copilot" label="Copilot" style="--cell:44px"></icon-button></div>`);
</script>
</body>
</html>
